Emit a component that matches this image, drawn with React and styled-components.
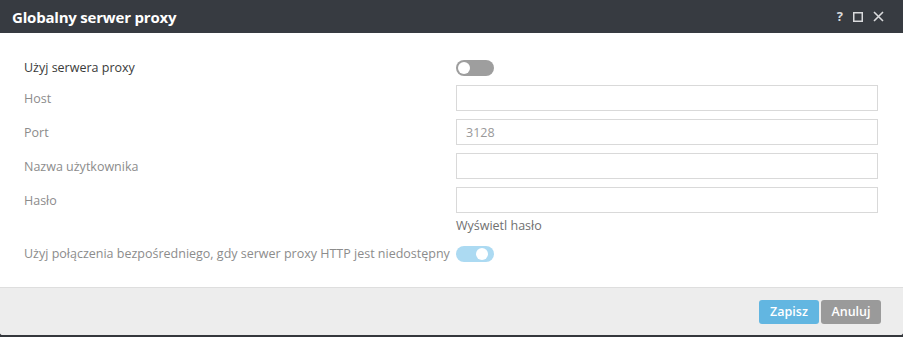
import React, { useState } from "react";
import styled, { createGlobalStyle } from "styled-components";

const GlobalStyle = createGlobalStyle`
  html, body {
    margin: 0;
    padding: 0;
    background: #34373c;
  }
  body {
    font-family: "Open Sans", "Noto Sans", sans-serif;
  }
`;

const Dialog = styled.div`
  width: 903px;
  height: 335px;
  display: flex;
  flex-direction: column;
  background: #fff;
  border-radius: 0 0 3px 3px;
  overflow: hidden;
`;

const Header = styled.div`
  height: 33px;
  flex: none;
  display: flex;
  align-items: center;
  justify-content: space-between;
  padding: 0 19px 0 12px;
  background: #373b41;
  color: #fff;
`;

const Title = styled.h1`
  margin: 0;
  font-size: 15px;
  font-weight: 700;
  letter-spacing: -0.2px;
`;

const HeaderTools = styled.div`
  display: flex;
  align-items: center;
  gap: 10px;
  color: #d9dadc;
`;

const Help = styled.span`
  font-size: 13px;
  font-weight: 700;
  line-height: 1;
`;

const Body = styled.div`
  flex: 1;
  padding: 26px 25px 0 24px;
  display: flex;
  flex-direction: column;
`;

const Row = styled.div`
  display: grid;
  grid-template-columns: 432px 1fr;
  align-items: center;
  min-height: ${(p) => p.$h || 26}px;
  margin-bottom: ${(p) => p.$gap ?? 8}px;
`;

const Label = styled.label`
  font-size: 12.5px;
  color: ${(p) => (p.$strong ? "#3a3a3a" : "#8c8c8c")};
`;

const Input = styled.input`
  box-sizing: border-box;
  height: 26px;
  width: 100%;
  border: 1px solid #d9d9d9;
  padding: 0 9px;
  font: inherit;
  font-size: 12.5px;
  color: #999;
  outline: none;
`;

const Track = styled.button`
  width: 38px;
  height: 16px;
  border-radius: 8px;
  border: none;
  padding: 2px;
  display: flex;
  justify-content: ${(p) => (p.$on ? "flex-end" : "flex-start")};
  background: ${(p) => (p.$on ? "#acdaf2" : "#9e9e9e")};
  cursor: pointer;
`;

const Knob = styled.span`
  width: 12px;
  height: 12px;
  border-radius: 50%;
  background: #fff;
  margin: 0 ${(p) => (p.$on ? 4 : 0)}px 0 0;
`;

const Hint = styled.div`
  grid-column: 2;
  font-size: 12.5px;
  color: #707070;
`;

const Footer = styled.div`
  height: 48px;
  flex: none;
  box-sizing: border-box;
  border-top: 1px solid #dedede;
  background: #ededed;
  display: flex;
  align-items: center;
  justify-content: flex-end;
  gap: 2px;
  padding: 0 22px 0 0;
`;

const Button = styled.button`
  height: 24px;
  min-width: 60px;
  border: none;
  border-radius: 3px;
  padding: 0 10px;
  font-family: inherit;
  font-size: 12.5px;
  font-weight: 600;
  color: #fff;
  background: ${(p) => (p.$primary ? "#62b6e1" : "#9a9a9a")};
  cursor: pointer;
`;

function Toggle({ on, onChange }) {
  return (
    <Track $on={on} onClick={() => onChange(!on)}>
      <Knob $on={on} />
    </Track>
  );
}

export default function App() {
  const [useProxy, setUseProxy] = useState(false);
  const [direct, setDirect] = useState(true);

  return (
    <>
      <GlobalStyle />
      <Dialog>
        <Header>
          <Title>Globalny serwer proxy</Title>
          <HeaderTools>
            <Help>?</Help>
            <svg width="10" height="10" viewBox="0 0 10 10">
              <rect x="0.75" y="0.75" width="8.5" height="8.5" fill="none" stroke="currentColor" strokeWidth="1.5" />
            </svg>
            <svg width="11" height="11" viewBox="0 0 11 11">
              <path d="M1 1 L10 10 M10 1 L1 10" stroke="currentColor" strokeWidth="1.6" />
            </svg>
          </HeaderTools>
        </Header>
        <Body>
          <Row $h={16} $gap={9}>
            <Label $strong>Użyj serwera proxy</Label>
            <div>
              <Toggle on={useProxy} onChange={setUseProxy} />
            </div>
          </Row>
          <Row>
            <Label>Host</Label>
            <Input />
          </Row>
          <Row>
            <Label>Port</Label>
            <Input defaultValue="3128" />
          </Row>
          <Row>
            <Label>Nazwa użytkownika</Label>
            <Input />
          </Row>
          <Row $gap={3}>
            <Label>Hasło</Label>
            <Input type="password" />
          </Row>
          <Row $h={18} $gap={11}>
            <Hint>Wyświetl hasło</Hint>
          </Row>
          <Row $h={16}>
            <Label>Użyj połączenia bezpośredniego, gdy serwer proxy HTTP jest niedostępny</Label>
            <div>
              <Toggle on={direct} onChange={setDirect} />
            </div>
          </Row>
        </Body>
        <Footer>
          <Button $primary>Zapisz</Button>
          <Button>Anuluj</Button>
        </Footer>
      </Dialog>
    </>
  );
}
